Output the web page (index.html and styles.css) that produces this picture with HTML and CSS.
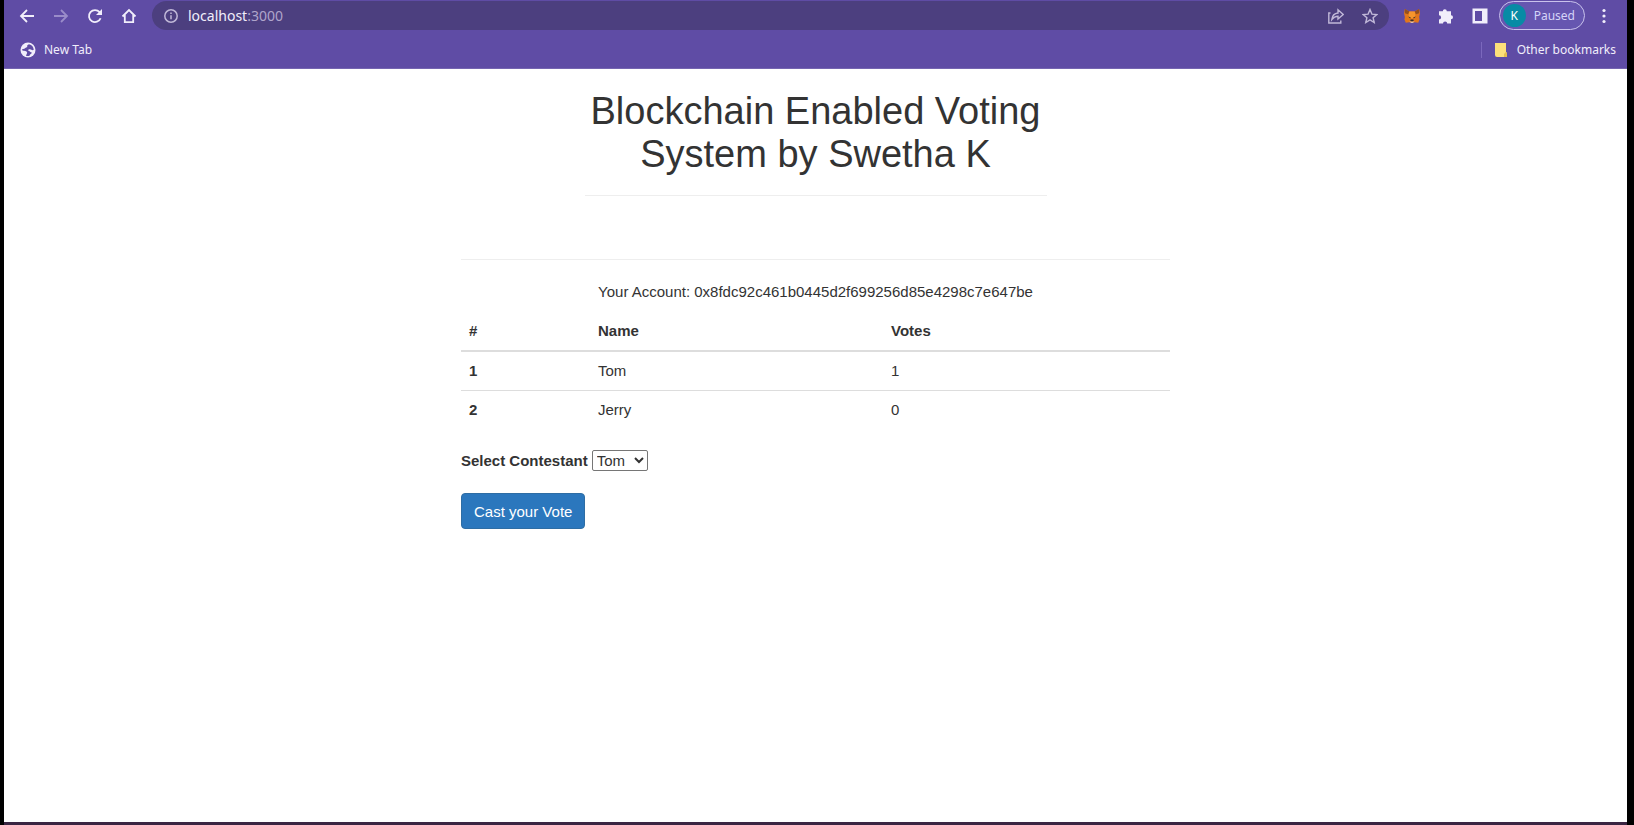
FILE: index.html
```html
<!DOCTYPE html>
<html lang="en">
<head>
<meta charset="utf-8">
<title>Blockchain Enabled Voting System</title>
<link rel="stylesheet" href="styles.css">
</head>
<body>
<div class="window">
  <header class="chrome">
    <nav class="toolbar" aria-label="Browser toolbar">
      <button class="icon-btn" aria-label="Back"><svg viewBox="0 0 16 16"><path d="M15 8H2M8 2L2 8l6 6"/></svg></button>
      <button class="icon-btn icon-btn--off" aria-label="Forward"><svg viewBox="0 0 16 16"><path d="M1 8h13M8 2l6 6-6 6"/></svg></button>
      <button class="icon-btn" aria-label="Reload"><svg viewBox="0 0 16 16"><path d="M13.6 10.2A6 6 0 1 1 12.6 4.2L14 5.6"/><path class="solid" d="M15 1v6H9z"/></svg></button>
      <button class="icon-btn" aria-label="Home"><svg viewBox="0 0 16 16"><path d="M1.500 8.500L8 2l6.500 6.500M3.800 7v7.200h8.400V7"/></svg></button>
      <div class="address">
        <svg class="info" viewBox="0 0 16 16" aria-hidden="true"><circle cx="8" cy="8" r="6.200"/><path d="M8 7.200v4M8 4.600v1.500"/></svg>
        <span class="url">localhost<span class="port">:3000</span></span>
        <button class="icon-btn icon-btn--soft" aria-label="Share"><svg viewBox="0 0 16 16"><path d="M2.500 5H.8v10h12v-2.500M3.800 11.500C4.300 7.500 6.500 5.300 10 5V1.800l5.200 4.700-5.200 4.500V8.200C7.500 8.200 5.500 9.200 3.800 11.500z"/></svg></button>
        <button class="icon-btn icon-btn--soft" aria-label="Bookmark"><svg viewBox="0 0 16 16"><path d="M8 1.500l1.900 4.600 4.900.4-3.700 3.200 1.100 4.800L8 11.900l-4.200 2.600 1.100-4.800L1.200 6.500l4.900-.4z"/></svg></button>
      </div>
      <button class="icon-btn" aria-label="MetaMask"><svg class="fox" viewBox="0 0 18 16"><path fill="#e2761b" d="M1 0l5 3h6l5-3 1 5-1 4 .5 3-1.500 3.500-4-.5-2 1H8l-2-1-4 .5L.5 12 1 9 0 5z"/><path fill="#94501f" d="M1 0l5 3-1.500 3L1 5zM17 0l-5 3 1.500 3L17 5z"/><path fill="#f6952c" d="M6 3h6l1 6-4 2-4-2z"/><path fill="#33302f" d="M4.500 8.500l3 1-.5 1.200zM13.500 8.500l-3 1 .5 1.200zM7.500 12h3l.5 2H7z"/><path fill="#d7c1b3" d="M6 14l3 .5 3-.5-2 2H8z"/></svg></button>
      <button class="icon-btn" aria-label="Extensions"><svg viewBox="0 0 16 16"><path class="solid" d="M4.800 3.200a2 2 0 0 1 4 0H13V7.200a2 2 0 0 1 0 4v4.300H9.200a2.100 2.100 0 0 0-4.200 0H1v-4a2.100 2.100 0 0 0 0-4.200V3.200z"/></svg></button>
      <button class="icon-btn" aria-label="Side panel"><svg viewBox="0 0 16 16"><path class="solid" fill-rule="evenodd" d="M.5.5h15v15H.5zM3 3v10h7V3z"/></svg></button>
      <button class="profile"><span class="avatar">K</span>Paused</button>
      <button class="icon-btn" aria-label="Menu"><svg viewBox="0 0 16 16"><circle class="solid" cx="8" cy="2.500" r="1.600"/><circle class="solid" cx="8" cy="8" r="1.600"/><circle class="solid" cx="8" cy="13.500" r="1.600"/></svg></button>
    </nav>
    <nav class="bookmarks" aria-label="Bookmarks">
      <a class="bookmark" href="#"><svg viewBox="0 0 16 16"><circle class="solid" cx="8" cy="8" r="7.500"/><path class="land" d="M9 2.300C7.500 2.800 6.800 3.800 7.300 5 5.500 5.200 5.500 7 2.200 7c0 .8.200 1.300.5 1.700 2 0 3.300 0 4.200 1.300.8 1.200-.4 1.800-.9 3.700 1 .4 2.500.4 3.500 0 .3-1.700 2.200-1.500 2.300-3.200-1.500-.3-2-1.500-3.500-1.800C7.800 7.500 9 7 10 7.200c1.300.3 2 1.300 3.700.8C13.700 5 12 3 9 2.300z"/></svg>New Tab</a>
      <a class="bookmark bookmark--other" href="#"><svg viewBox="0 0 16 16"><path fill="#fddf7a" d="M2 1h11v9l1 1v4H4a2 2 0 0 1-2-2z"/><path fill="#e6bd4e" d="M11 15v-3l2-2 1 1v4z"/></svg>Other bookmarks</a>
    </nav>
  </header>
  <main class="page">
    <h1 class="title">Blockchain Enabled Voting System by Swetha K</h1>
    <section class="content">
      <p class="account">Your Account: 0x8fdc92c461b0445d2f699256d85e4298c7e647be</p>
      <table class="results">
        <thead><tr><th class="col-id" scope="col">#</th><th class="col-name" scope="col">Name</th><th scope="col">Votes</th></tr></thead>
        <tbody>
          <tr><th scope="row">1</th><td>Tom</td><td>1</td></tr>
          <tr><th scope="row">2</th><td>Jerry</td><td>0</td></tr>
        </tbody>
      </table>
      <form class="vote">
        <div class="field"><label for="contestant">Select Contestant</label>
          <select id="contestant"><option>Tom</option><option>Jerry</option></select></div>
        <button class="cast" type="button">Cast your Vote</button>
      </form>
    </section>
  </main>
</div>
</body>
</html>
```
FILE: styles.css
```css
* { box-sizing: border-box; }
body {
  margin: 0;
  background: #000;
  color: #333;
  font: 15px/21px "Liberation Sans", Arial, sans-serif;
}
button { font: inherit; border: 0; padding: 0; background: none; color: inherit; }
.window {
  min-height: 100vh;
  margin: 0 7px 0 4px;
  background: #fff;
  border-bottom: 3px solid #3a2542;
}
.chrome {
  background: #5f4ca5;
  border-bottom: 1px solid #7565b0;
  color: #f1eefb;
  font: 12px/16px "Noto Sans", "Open Sans", sans-serif;
}
.toolbar { display: flex; align-items: center; gap: 18px; height: 31px; padding: 0 15px; }
.icon-btn { display: flex; flex: none; }
.icon-btn svg, .info, .bookmark svg {
  flex: none;
  width: 16px; height: 16px; fill: none; stroke: currentColor; stroke-width: 1.8;
}
.icon-btn .solid, .bookmark .solid { fill: currentColor; stroke: none; }
.icon-btn--off { color: #9a8cc9; }
.icon-btn--soft { color: #c0b8d8; }
.icon-btn--soft svg { stroke-width: 1.4; }
.icon-btn .fox { stroke: none; }
.address {
  flex: 1;
  display: flex;
  align-items: center;
  gap: 18px;
  height: 29px;
  padding: 0 11px;
  margin: 0 -3px;
  border-radius: 15px;
  background: #4c3f7f;
}
.address .info { stroke-width: 1.5; color: #c0b8d8; margin-right: -9px; }
.url { flex: 1; font-size: 14px; }
.port { color: #afa5cb; }
.profile {
  display: flex;
  align-items: center;
  gap: 8px;
  height: 29px;
  padding: 0 9px 0 3px;
  margin: 0 -7px;
  border: 1px solid #c9c2ec;
  border-radius: 15px;
  background: #6656b0;
  color: #d5d4f8;
}
.avatar { width: 23px; height: 23px; border-radius: 50%; background: #078ba5; color: #fff; line-height: 23px; text-align: center; }
.bookmarks { display: flex; align-items: center; justify-content: space-between; height: 37px; padding: 0 11px 0 16px; }
.bookmark { display: flex; align-items: center; gap: 8px; color: inherit; text-decoration: none; }
.bookmark svg { stroke: none; }
.bookmark .land { fill: #5f4ca5; }
.bookmark--other { padding-left: 11px; border-left: 1px solid #7b68bd; }
.page { display: flex; flex-direction: column; align-items: center; padding-top: 21px; }
.title {
  width: 462px;
  margin: 0;
  padding-bottom: 19px;
  border-bottom: 1px solid #eee;
  font-size: 38px;
  font-weight: 400;
  line-height: 43px;
  text-align: center;
}
.content { width: 709px; margin-top: 63px; border-top: 1px solid #eee; }
.account { margin: 21px 0 10px; text-align: center; }
.results { width: 100%; border-collapse: collapse; table-layout: fixed; line-height: 22px; text-align: left; }
.results th, .results td { padding: 8px; border-top: 1px solid #ddd; }
.results thead th { border-top: 0; border-bottom: 2px solid #ddd; }
.col-id { width: 129px; }
.col-name { width: 293px; }
.vote { margin: 21px 0 0; }
.field { display: flex; align-items: center; gap: 4px; }
.field label { font-weight: 700; }
.field select { height: 21px; font: inherit; line-height: 18px; color: inherit; background: #fff; border: 1px solid #767676; border-radius: 2px; }
.cast {
  height: 36px;
  margin-top: 22px;
  padding: 0 12px;
  border: 1px solid #2e6da4;
  border-radius: 4px;
  background: #2b77bd;
  color: #fff;
}
```
